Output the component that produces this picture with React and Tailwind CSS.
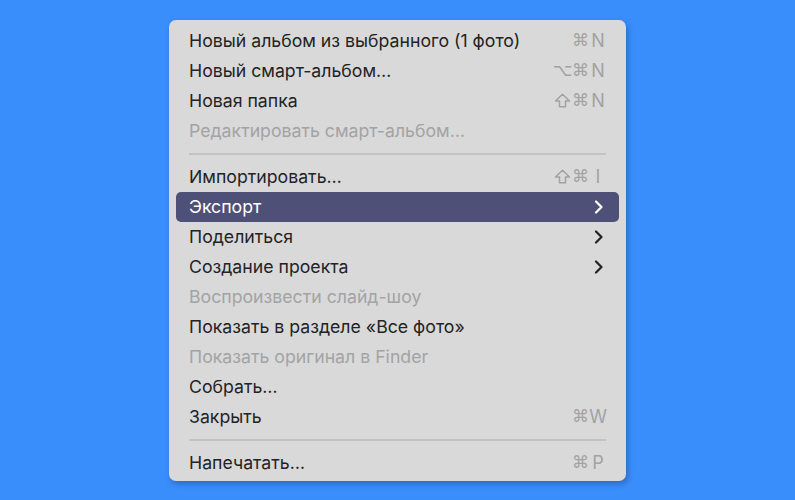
import React from 'react';

const items = [
  { label: 'Новый альбом из выбранного (1 фото)', mods: ['⌘'], key: 'N' },
  { label: 'Новый смарт-альбом…', mods: ['⌥', '⌘'], key: 'N' },
  { label: 'Новая папка', mods: ['⇧', '⌘'], key: 'N' },
  { label: 'Редактировать смарт-альбом…', disabled: true },
  { sep: true },
  { label: 'Импортировать…', mods: ['⇧', '⌘'], key: 'I' },
  { label: 'Экспорт', submenu: true, active: true },
  { label: 'Поделиться', submenu: true },
  { label: 'Создание проекта', submenu: true },
  { label: 'Воспроизвести слайд-шоу', disabled: true },
  { label: 'Показать в разделе «Все фото»' },
  { label: 'Показать оригинал в Finder', disabled: true },
  { label: 'Собрать…' },
  { label: 'Закрыть', mods: ['⌘'], key: 'W' },
  { sep: true },
  { label: 'Напечатать…', mods: ['⌘'], key: 'P' },
];

function Chevron({ color }) {
  return (
    <svg width="10" height="14" viewBox="0 0 10 14" className="block">
      <path d="M2 1.5 L7.5 7 L2 12.5" fill="none" stroke={color} strokeWidth="2.2" strokeLinecap="round" strokeLinejoin="round" />
    </svg>
  );
}

function ShiftIcon() {
  return (
    <svg width="17" height="15" viewBox="0 0 17 15" className="block">
      <path d="M8.5 1.2 L15.5 8 L11.5 8 L11.5 13.8 L5.5 13.8 L5.5 8 L1.5 8 Z" fill="none" stroke="#a2a2a3" strokeWidth="1.5" strokeLinejoin="round" />
    </svg>
  );
}

function Shortcut({ mods, k }) {
  const first = mods.length === 2 ? mods[0] : null;
  return (
    <div className="flex items-center text-[#a2a2a3] font-['DejaVu_Sans',sans-serif]">
      {first === '⇧' && (
        <span className="w-[19px] flex justify-center"><ShiftIcon /></span>
      )}
      {first === '⌥' && <span className="w-[19px] text-center text-[17px] leading-none">⌥</span>}
      <span className="w-[16px] text-center text-[17px] leading-none">⌘</span>
      <span className="w-[18px] ml-[1px] text-center text-[18px] leading-none font-['Inter',sans-serif]">{k}</span>
    </div>
  );
}

export default function App() {
  return (
    <div className="w-[795px] h-[500px] bg-[#3a8efc] flex items-center justify-center font-['Inter',sans-serif]">
      <div className="w-[457px] h-[461px] bg-[#d9d9da] rounded-[7px] pt-[6px] pb-[3px] shadow-[2px_3px_6px_rgba(0,0,0,0.25)] flex flex-col">
        {items.map((it, i) => {
          if (it.sep) {
            return (
              <div key={i} className="h-[16px] flex items-center px-[20px]">
                <div className="h-[2px] w-full bg-[#c3c3c4]" />
              </div>
            );
          }
          const textColor = it.active ? 'text-white' : it.disabled ? 'text-[#a3a3a4]' : 'text-[#232323]';
          return (
            <div key={i} className="h-[30px] px-[7px] flex">
              <div className={`flex-1 flex items-center justify-between rounded-[5px] pl-[13px] pr-[12px] ${it.active ? 'bg-[#4f5078]' : ''}`}>
                <span className={`text-[17.7px] leading-none ${textColor}`}>{it.label}</span>
                {it.mods && <Shortcut mods={it.mods} k={it.key} />}
                {it.submenu && (
                  <div className="pr-[3px]">
                    <Chevron color={it.active ? '#ffffff' : '#232323'} />
                  </div>
                )}
              </div>
            </div>
          );
        })}
      </div>
    </div>
  );
}
